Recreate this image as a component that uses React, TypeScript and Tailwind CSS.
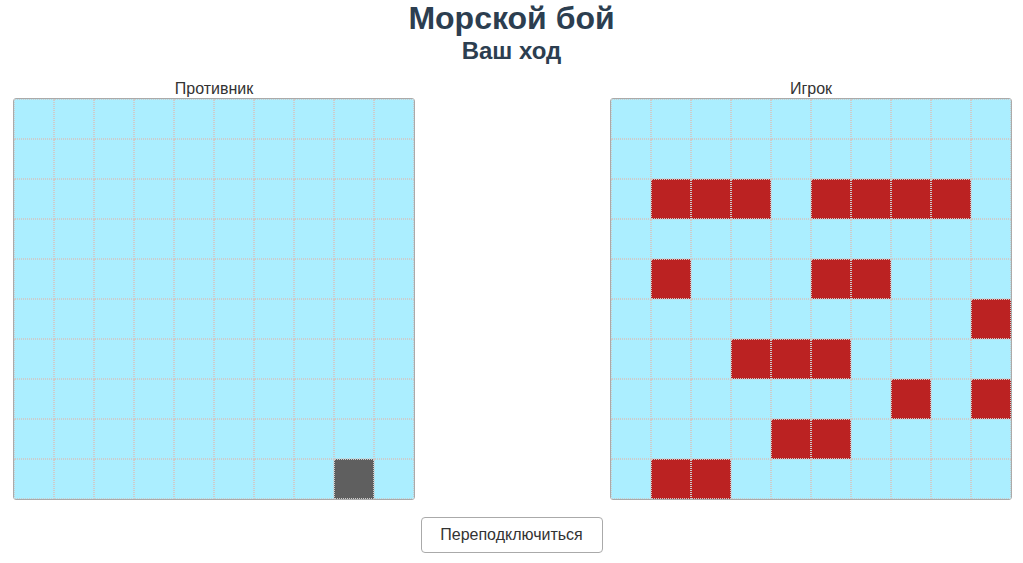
const ENEMY: Record<string, string> = { "9-8": "miss" };

const PLAYER: Record<string, string> = {
  "2-1": "ship", "2-2": "ship", "2-3": "ship",
  "2-5": "ship", "2-6": "ship", "2-7": "ship", "2-8": "ship",
  "4-1": "ship", "4-5": "ship", "4-6": "ship",
  "5-9": "ship",
  "6-3": "ship", "6-4": "ship", "6-5": "ship",
  "7-7": "ship", "7-9": "ship",
  "8-4": "ship", "8-5": "ship",
  "9-1": "ship", "9-2": "ship",
};

const rows = Array.from({ length: 10 }, (_, i) => i);

function Board({ title, cells }: { title: string; cells: Record<string, string> }) {
  return (
    <div className="flex flex-col items-center">
      <div className="text-base leading-[18px] text-[#333]">{title}</div>
      <div className="grid grid-cols-10 overflow-hidden rounded-[3px] border border-[#aaa]">
        {rows.map((r) =>
          rows.map((c) => {
            const state = cells[`${r}-${c}`];
            const bg =
              state === "ship" ? "bg-[#bb2222]" : state === "miss" ? "bg-[#5f5f5f]" : "bg-[#abeeff]";
            return (
              <div
                key={`${r}-${c}`}
                className={`h-10 w-10 border border-dotted border-[#cccccc] ${bg}`}
              />
            );
          })
        )}
      </div>
    </div>
  );
}

export default function App() {
  return (
    <div className="min-h-screen bg-white text-center font-['Liberation_Sans',Arial,sans-serif] text-[#2c3e50]">
      <h1 className="text-[32px] leading-[37px] font-bold">Морской бой</h1>
      <h2 className="text-2xl leading-[28px] font-bold">Ваш ход</h2>

      <div className="mt-[15px] flex gap-[195px] pl-[13px]">
        <Board title="Противник" cells={ENEMY} />
        <Board title="Игрок" cells={PLAYER} />
      </div>

      <button className="mt-[17px] h-9 w-[182px] rounded-[4px] border border-[#aaa] bg-white text-base text-[#333]">
        Переподключиться
      </button>
    </div>
  );
}
